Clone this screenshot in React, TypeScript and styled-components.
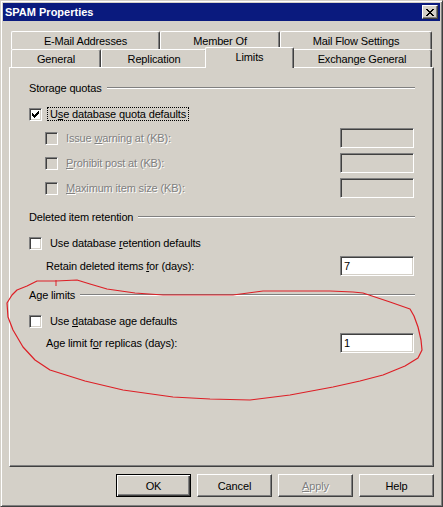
import React from "react";
import styled, { createGlobalStyle } from "styled-components";

const GlobalStyle = createGlobalStyle`
  html, body { margin: 0; padding: 0; background: #d4d0c8; }
  body { font-family: "Liberation Sans", Arial, sans-serif; font-size: 11px; color: #000; letter-spacing: -0.15px; }
  * { box-sizing: border-box; }
`;

const Window = styled.div`
  position: relative;
  width: 443px;
  height: 507px;
  background: #d4d0c8;
  border: 1px solid;
  border-color: #d4d0c8 #404040 #404040 #d4d0c8;
  box-shadow: inset 1px 1px 0 #fff, inset -1px -1px 0 #808080;
  padding: 2px;
  display: flex;
  flex-direction: column;
`;

const TitleBar = styled.div`
  height: 18px;
  flex: 0 0 18px;
  background: #0a1a7e;
  display: flex;
  align-items: center;
  justify-content: space-between;
  padding: 0 2px;
`;

const TitleText = styled.span`
  color: #fff;
  font-weight: bold;
  font-size: 11px;
  line-height: 14px;
  letter-spacing: 0;
  white-space: nowrap;
`;

const CloseButton = styled.div`
  width: 16px;
  height: 14px;
  background: #d4d0c8;
  border: 1px solid;
  border-color: #fff #404040 #404040 #fff;
  box-shadow: inset -1px -1px 0 #808080;
  display: flex;
  align-items: center;
  justify-content: center;
  padding-right: 1px;
`;

const Body = styled.div`
  flex: 1;
  display: flex;
  flex-direction: column;
  padding: 10px 6px 7px;
`;

const TabStrip = styled.div`
  display: flex;
  flex-direction: column;
  padding: 0 2px;
`;

const TabRow = styled.div`
  display: flex;
  height: 18px;
`;

const Tab = styled.div<{ $w: number; $active?: boolean }>`
  flex: 0 0 ${(p) => p.$w + (p.$active ? 4 : 0)}px;
  height: ${(p) => (p.$active ? 21 : 18)}px;
  margin: ${(p) => (p.$active ? "-2px -2px -1px" : "0")};
  position: relative;
  z-index: ${(p) => (p.$active ? 2 : 1)};
  background: #d4d0c8;
  border-left: 1px solid #fff;
  border-top: 1px solid #fff;
  border-right: 1px solid #404040;
  border-radius: 2px 2px 0 0;
  box-shadow: inset -1px 0 0 #808080;
  text-align: center;
  padding-top: 2px;
  line-height: 14px;
  white-space: nowrap;
`;

const Panel = styled.div`
  height: 400px;
  flex: 0 0 400px;
  border: 1px solid;
  border-color: #fff #404040 #404040 #fff;
  box-shadow: inset -1px -1px 0 #808080;
  padding: 13px 18px 0 19px;
  display: flex;
  flex-direction: column;
`;

const GroupHeader = styled.div<{ $mt: number }>`
  display: flex;
  align-items: center;
  gap: 5px;
  height: 14px;
  margin-top: ${(p) => p.$mt}px;
`;

const GroupTitle = styled.span`
  white-space: nowrap;
  line-height: 14px;
`;

const Etch = styled.div`
  flex: 1;
  height: 2px;
  border-top: 1px solid #808080;
  border-bottom: 1px solid #fff;
`;

const CheckRow = styled.div<{ $mt: number }>`
  display: flex;
  align-items: center;
  height: 16px;
  margin-top: ${(p) => p.$mt}px;
`;

const FieldRow = styled.div<{ $mt: number }>`
  display: flex;
  align-items: center;
  justify-content: space-between;
  height: 20px;
  margin-top: ${(p) => p.$mt}px;
  padding-right: 1px;
`;

const CheckGroup = styled.div<{ $indent?: number }>`
  display: flex;
  align-items: center;
  gap: 5px;
  padding-left: ${(p) => p.$indent ?? 0}px;
`;

const Box = styled.span<{ $disabled?: boolean }>`
  flex: 0 0 13px;
  width: 13px;
  height: 13px;
  background: ${(p) => (p.$disabled ? "#d4d0c8" : "#fff")};
  border: 1px solid;
  border-color: #808080 #fff #fff #808080;
  box-shadow: inset 1px 1px 0 #404040, inset -1px -1px 0 #d4d0c8;
  display: flex;
  align-items: center;
  justify-content: center;
`;

const Label = styled.span<{ $focus?: boolean; $disabled?: boolean }>`
  border: 1px ${(p) => (p.$focus ? "dotted #000" : "solid transparent")};
  padding: 0 2px;
  line-height: 12px;
  white-space: nowrap;
  color: ${(p) => (p.$disabled ? "#808080" : "#000")};
  text-shadow: ${(p) => (p.$disabled ? "1px 1px 0 #fff" : "none")};
`;

const FieldLabel = styled.span`
  padding-left: 17px;
  white-space: nowrap;
  line-height: 14px;
`;

const TextBox = styled.div<{ $disabled?: boolean }>`
  width: 74px;
  height: 20px;
  border: 1px solid;
  border-color: #808080 #fff #fff #808080;
  box-shadow: inset 1px 1px 0 #404040, inset -1px -1px 0 #d4d0c8;
  background: ${(p) => (p.$disabled ? "#d4d0c8" : "#fff")};
  padding: 0 3px;
  line-height: 18px;
  white-space: nowrap;
`;

const Key = styled.span`
  text-decoration: underline;
`;

const ButtonBar = styled.div`
  display: flex;
  justify-content: flex-end;
  gap: 6px;
  margin-top: 7px;
`;

const Button = styled.div<{ $default?: boolean; $disabled?: boolean }>`
  width: 75px;
  height: 23px;
  background: #d4d0c8;
  border: 1px solid;
  border-color: ${(p) => (p.$default ? "#000" : "#fff #404040 #404040 #fff")};
  box-shadow: ${(p) =>
    p.$default
      ? "inset 1px 1px 0 #fff, inset -1px -1px 0 #404040, inset -2px -2px 0 #808080"
      : "inset -1px -1px 0 #808080"};
  display: flex;
  align-items: center;
  justify-content: center;
  color: ${(p) => (p.$disabled ? "#808080" : "#000")};
  text-shadow: ${(p) => (p.$disabled ? "1px 1px 0 #fff" : "none")};
  line-height: 14px;
`;

const Scribble = styled.svg`
  position: absolute;
  top: -1px;
  left: -1px;
  width: 443px;
  height: 507px;
  pointer-events: none;
  z-index: 5;
`;

const CheckMark = () => (
  <svg width="7" height="7" viewBox="0 0 7 7" shapeRendering="crispEdges">
    <g fill="#000">
      <rect x="6" y="0" width="1" height="1" />
      <rect x="5" y="1" width="2" height="1" />
      <rect x="0" y="2" width="1" height="1" />
      <rect x="4" y="2" width="3" height="1" />
      <rect x="0" y="3" width="2" height="1" />
      <rect x="3" y="3" width="3" height="1" />
      <rect x="0" y="4" width="5" height="1" />
      <rect x="1" y="5" width="3" height="1" />
      <rect x="2" y="6" width="1" height="1" />
    </g>
  </svg>
);

const CloseGlyph = () => (
  <svg width="8" height="7" viewBox="0 0 8 7" shapeRendering="crispEdges">
    <g fill="#000">
      <rect x="0" y="0" width="2" height="1" />
      <rect x="6" y="0" width="2" height="1" />
      <rect x="1" y="1" width="2" height="1" />
      <rect x="5" y="1" width="2" height="1" />
      <rect x="2" y="2" width="4" height="1" />
      <rect x="3" y="3" width="2" height="1" />
      <rect x="2" y="4" width="4" height="1" />
      <rect x="1" y="5" width="2" height="1" />
      <rect x="5" y="5" width="2" height="1" />
      <rect x="0" y="6" width="2" height="1" />
      <rect x="6" y="6" width="2" height="1" />
    </g>
  </svg>
);

type CheckProps = {
  checked?: boolean;
  disabled?: boolean;
  focus?: boolean;
  indent?: number;
  children: React.ReactNode;
};

const Check: React.FC<CheckProps> = ({ checked, disabled, focus, indent, children }) => (
  <CheckGroup $indent={indent}>
    <Box $disabled={disabled}>{checked && <CheckMark />}</Box>
    <Label $focus={focus} $disabled={disabled}>
      {children}
    </Label>
  </CheckGroup>
);

const Group: React.FC<{ title: string; mt: number }> = ({ title, mt }) => (
  <GroupHeader $mt={mt}>
    <GroupTitle>{title}</GroupTitle>
    <Etch />
  </GroupHeader>
);

const scribblePoints = [
  [56, 281], [77, 280], [90, 284], [107, 289], [135, 293], [163, 295], [200, 295],
  [233, 295], [263, 291], [300, 291], [330, 291], [353, 292], [363, 293], [390, 302],
  [410, 309], [414, 316], [418, 327], [421, 340], [422, 350], [418, 358], [405, 366],
  [383, 375], [360, 381], [333, 387], [290, 395], [250, 400], [210, 399], [173, 397],
  [123, 390], [85, 381], [50, 370], [35, 360], [23, 347], [13, 330], [8, 317], [7, 303],
  [12, 295], [17, 290], [27, 286], [37, 281], [58, 281],
];

const App: React.FC = () => {
  const d = "M " + scribblePoints.map((p) => p.join(" ")).join(" L ");
  return (
    <>
      <GlobalStyle />
      <Window>
        <TitleBar>
          <TitleText>SPAM Properties</TitleText>
          <CloseButton>
            <CloseGlyph />
          </CloseButton>
        </TitleBar>
        <Body>
          <TabStrip>
            <TabRow>
              <Tab $w={149}>E-Mail Addresses</Tab>
              <Tab $w={120}>Member Of</Tab>
              <Tab $w={152}>Mail Flow Settings</Tab>
            </TabRow>
            <TabRow>
              <Tab $w={90}>General</Tab>
              <Tab $w={106}>Replication</Tab>
              <Tab $w={85} $active>
                Limits
              </Tab>
              <Tab $w={140}>Exchange General</Tab>
            </TabRow>
          </TabStrip>
          <Panel>
            <Group title="Storage quotas" mt={0} />
            <CheckRow $mt={11}>
              <Check checked focus>
                U<Key>s</Key>e database quota defaults
              </Check>
            </CheckRow>
            <FieldRow $mt={6}>
              <Check disabled indent={16}>
                Issue <Key>w</Key>arning at (KB):
              </Check>
              <TextBox $disabled />
            </FieldRow>
            <FieldRow $mt={5}>
              <Check disabled indent={16}>
                <Key>P</Key>rohibit post at (KB):
              </Check>
              <TextBox $disabled />
            </FieldRow>
            <FieldRow $mt={5}>
              <Check disabled indent={16}>
                <Key>M</Key>aximum item size (KB):
              </Check>
              <TextBox $disabled />
            </FieldRow>

            <Group title="Deleted item retention" mt={12} />
            <CheckRow $mt={11}>
              <Check>
                Use database <Key>r</Key>etention defaults
              </Check>
            </CheckRow>
            <FieldRow $mt={5}>
              <FieldLabel>
                Retain deleted items <Key>f</Key>or (days):
              </FieldLabel>
              <TextBox>7</TextBox>
            </FieldRow>

            <Group title="Age limits" mt={12} />
            <CheckRow $mt={11}>
              <Check>
                Use <Key>d</Key>atabase age defaults
              </Check>
            </CheckRow>
            <FieldRow $mt={4}>
              <FieldLabel>
                Age limit f<Key>o</Key>r replicas (days):
              </FieldLabel>
              <TextBox>1</TextBox>
            </FieldRow>
          </Panel>
          <ButtonBar>
            <Button $default>OK</Button>
            <Button>Cancel</Button>
            <Button $disabled>
              <Key>A</Key>pply
            </Button>
            <Button>Help</Button>
          </ButtonBar>
        </Body>
        <Scribble viewBox="0 0 443 507">
          <path d={d} fill="none" stroke="#dd1f26" strokeWidth="1.2" strokeLinejoin="round" />
          <path d="M 56 280 L 56 286" fill="none" stroke="#dd1f26" strokeWidth="1" />
        </Scribble>
      </Window>
    </>
  );
};

export default App;
